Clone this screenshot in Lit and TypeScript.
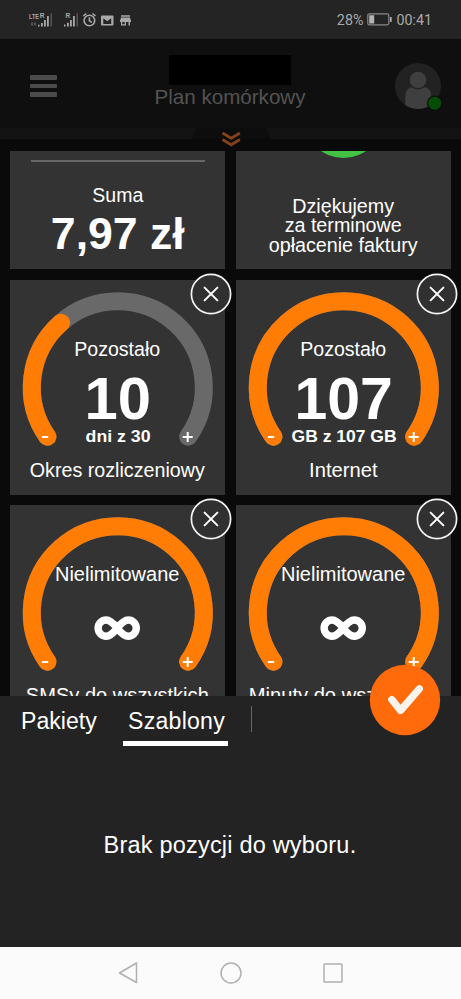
import { LitElement, html, svg, css } from "lit";
import { customElement, property } from "lit/decorators.js";

interface GaugeData {
  caption: string;
  captionWidth: number;
  label: string;
  labelWidth: number;
  value?: string;
  valueWidth?: number;
  detail?: string;
  detailWidth?: number;
  fraction: number;
}

const GAUGES: GaugeData[] = [
  { caption: "Pozostało", captionWidth: 86, value: "10", valueWidth: 66.5, detail: "dni z 30", detailWidth: 65, label: "Okres rozliczeniowy", labelWidth: 175, fraction: 0.335 },
  { caption: "Pozostało", captionWidth: 86, value: "107", valueWidth: 98.5, detail: "GB z 107 GB", detailWidth: 105, label: "Internet", labelWidth: 68.5, fraction: 1 },
  { caption: "Nielimitowane", captionWidth: 124.5, label: "SMSy do wszystkich", labelWidth: 183, fraction: 1 },
  { caption: "Nielimitowane", captionWidth: 124.5, label: "Minuty do wszystkich", labelWidth: 189, fraction: 1 },
];

@customElement("usage-gauge")
export class UsageGauge extends LitElement {
  @property({ attribute: false }) data!: GaugeData;

  static styles = css`
    :host { display: block; position: relative; height: 215px; background: #333; }
    svg { display: block; }
    .dial { width: 215px; height: 215px; }
    .track, .fill { fill: none; stroke-width: 18; stroke-linecap: round; }
    .track { stroke: #696969; }
    .fill { stroke: #ff7d05; }
    text { fill: #fff; text-anchor: middle; font-family: "Liberation Sans", Arial, sans-serif; font-size: 19.3px; }
    .value { font-size: 59px; font-weight: 700; }
    .detail { font-size: 17px; font-weight: 700; }
    .sign { fill: none; stroke: #fff; stroke-width: 2; }
    .infinity { fill: none; stroke: #fff; stroke-width: 7.4; }
    .close { position: absolute; right: -7.2px; top: -6.7px; width: 42px; height: 42px; }
    .ring { fill: #303030; stroke: #f4f4f4; stroke-width: 1.7; }
    .cross { stroke: #fff; stroke-width: 2; stroke-linecap: round; }
  `;

  private arc(fraction: number): string {
    const r = 86, cx = 107.8, cy = 107.3, start = 144.9, sweep = 250.2 * fraction;
    const at = (deg: number) => {
      const a = (deg * Math.PI) / 180;
      return `${(cx + r * Math.cos(a)).toFixed(2)} ${(cy + r * Math.sin(a)).toFixed(2)}`;
    };
    return `M${at(start)}A${r} ${r} 0 ${sweep > 180 ? 1 : 0} 1 ${at(start + sweep)}`;
  }

  render() {
    const d = this.data;
    return html`
      <svg class="dial" viewBox="0 0 215 215">
        <path class="track" d=${this.arc(1)}></path>
        <path class="fill" d=${this.arc(d.fraction)}></path>
        <path class="sign" d="M31.9 157h6.3M172.7 157h10M177.7 152v10"></path>
        <text x="107.2" y="75.8" textLength=${d.captionWidth} lengthAdjust="spacingAndGlyphs">${d.caption}</text>
        ${d.value
          ? svg`<text class="value" x="107.7" y="139.2" textLength=${d.valueWidth} lengthAdjust="spacingAndGlyphs">${d.value}</text>
              <text class="detail" x="108.1" y="161.8" textLength=${d.detailWidth} lengthAdjust="spacingAndGlyphs">${d.detail}</text>`
          : svg`<path class="infinity" d="M107.2 123.1C103 117.800 100 115 96.200 115a8.100 8.100 0 0 0 0 16.200C100 131.200 103 128.400 107.200 123.100S114.400 115 118.200 115a8.100 8.100 0 0 1 0 16.200C114.400 131.200 111.400 128.400 107.200 123.100Z"></path>`}
        <text x="107.3" y="196.6" textLength=${d.labelWidth} lengthAdjust="spacingAndGlyphs">${d.label}</text>
      </svg>
      <svg class="close" viewBox="0 0 42 42">
        <circle class="ring" cx="21" cy="21" r="19.6"></circle>
        <path class="cross" d="M14.6 14.6l12.8 12.8M27.4 14.6L14.6 27.4"></path>
      </svg>
    `;
  }
}

@customElement("status-bar")
export class StatusBar extends LitElement {
  static styles = css`
    :host { display: flex; box-sizing: border-box; height: 39px; padding: 0 29px 0 28px; justify-content: space-between; align-items: center; background: #242424; color: #a9a9a9; font: 14.3px Roboto, sans-serif; }
    svg { display: block; }
    .group { display: flex; align-items: center; gap: 4px; }
    .tiny { font: 700 8px "Liberation Sans", sans-serif; }
    .small { font: 700 6.5px "Liberation Sans", sans-serif; }
  `;
  render() {
    return html`
      <svg width="106" height="20" viewBox="28 9.5 106 20" fill="#a9a9a9">
        <text class="tiny" x="29" y="18.800" textLength="10" lengthAdjust="spacingAndGlyphs">LTE</text>
        <text class="small" x="39.700" y="17.300">R</text>
        <text class="small" x="65.500" y="17.300">R</text>
        <path fill="#555" d="M31 22h2v3h-2zM34 22h2v3h-2zM50.5 13h1.5v13h-1.5zM76.5 13h1.5v13h-1.5z"></path>
        <path d="M38 24.3h1.5v1.7H38zM41 22.5h1.8V26H41zM44 19.5h1.8V26H44zM47 15.5h1.8V26H47zM64 24h1.5v2H64zM67 22.3h1.8V26H67zM70 19.5h1.8V26H70zM73 15.5h1.8V26H73z"></path>
        <g fill="none" stroke="#a9a9a9" stroke-width="1.6">
          <circle cx="89.4" cy="20" r="5.300"></circle>
          <path d="M89.4 16.8v3.4l2.4 1.6M83.3 15.5l3-2.5M95.5 15.500l-3-2.500"></path>
        </g>
        <path fill-rule="evenodd" d="M102 15h10.5q1 0 1 1v8q0 1-1 1H102q-1 0-1-1v-8q0-1 1-1zM103.300 17.800v5.700h7.900v-5.700l-3.950 3z"></path>
        <path fill-rule="evenodd" d="M121 14.7h9v1.5h-9zM121 17h9l1 3.2v1.3h-1V25h-1.5v-3.5H126V25h-5v-3.5h-1v-1.3zM122.3 21.5v2.2h2.4v-2.2z"></path>
      </svg>
      <div class="group">
        <span>28%</span>
        <svg width="25" height="13" viewBox="0 0 25 13">
          <rect x=".8" y=".8" width="21" height="11" rx="1.5" fill="none" stroke="#888" stroke-width="1.2"></rect>
          <path fill="#b4b4b4" d="M2.2 2.2h5v8.2h-5zM23 4h1.6v5H23z"></path>
        </svg>
        <span>00:41</span>
      </div>
    `;
  }
}

@customElement("app-root")
export class AppRoot extends LitElement {
  static styles = css`
    :host { display: flex; flex-direction: column; width: 461px; height: 999px; overflow: hidden; background: #0a0a0a; color: #fff; font-family: "Liberation Sans", Arial, sans-serif; white-space: nowrap; }
    svg { display: block; }
    .header { display: grid; grid-template-columns: 84px 1fr 85px; height: 89px; background: #0f0f0f; }
    .menu { display: flex; flex-direction: column; gap: 4.2px; padding: 36px 0 0 30px; }
    .bar { width: 26.5px; height: 4.5px; border-radius: 1px; background: #4b4b4b; }
    .title { display: flex; flex-direction: column; align-items: center; }
    .redacted { width: 122px; height: 30px; margin-top: 16px; background: #000; }
    .plan { color: #535353; font-size: 20.6px; line-height: 23px; }
    .avatar { padding: 22px 0 0 17px; }
    .pull { height: 23px; }
    .viewport { flex: none; height: 544.5px; overflow: hidden; }
    .cards { display: grid; grid-template-columns: 215px 215px; gap: 10.4px; padding-left: 10.3px; }
    .card { height: 118.3px; overflow: hidden; background: #333; text-align: center; }
    .rule { height: 2px; margin: 9px 20.5px 0; background: #666; }
    .suma { margin-top: 20.5px; font-size: 19.5px; line-height: 24px; }
    .amount { font-size: 44.6px; font-weight: 700; line-height: 50px; margin-top: 2.5px; }
    .thanks { margin-top: 37.5px; font-size: 19.7px; line-height: 19.7px; }
    .panel { display: flex; flex-direction: column; flex: none; position: relative; height: 251.5px; background: #232323; }
    .tabs { display: flex; height: 50px; padding-left: 21px; box-sizing: border-box; font-size: 23.1px; line-height: 50px; }
    .tab { width: 102px; }
    .selected { box-sizing: border-box; width: 105px; padding-left: 5px; border-bottom: 5px solid #fff; letter-spacing: .25px; }
    .divider { width: 1.4px; height: 26px; margin: 10px 0 0 22.8px; background: #666; }
    .empty { padding-top: 85px; text-align: center; font-size: 23.5px; line-height: 28px; letter-spacing: .2px; text-indent: -1px; }
    .fab { position: absolute; left: 369.3px; top: -31.8px; }
    .nav { display: flex; justify-content: space-between; align-items: center; flex: 1; padding: 0 116px; background: #fbfbfb; }
  `;

  render() {
    return html`
      <status-bar></status-bar>
      <header class="header">
        <div class="menu"><div class="bar"></div><div class="bar"></div><div class="bar"></div></div>
        <div class="title"><div class="redacted"></div><div class="plan">Plan komórkowy</div></div>
        <div class="avatar">
          <svg width="50" height="52" viewBox="0 0 50 52">
            <clipPath id="disc"><circle cx="25" cy="25" r="23"></circle></clipPath>
            <circle cx="25" cy="25" r="23" fill="#222"></circle>
            <g clip-path="url(#disc)" fill="#3f3f3f">
              <path d="M12.300 50V37q0-11 8-11h10q8 0 8 11v13z"></path>
              <circle cx="25" cy="19" r="9.500" fill="#222"></circle>
              <circle cx="25" cy="19" r="8.300"></circle>
            </g>
            <circle cx="41.700" cy="42.200" r="7.800" fill="#0f0f0f"></circle>
            <circle cx="41.700" cy="42.200" r="6.500" fill="#064b06"></circle>
          </svg>
        </div>
      </header>
      <svg class="pull" width="461" height="23" viewBox="0 128 461 23">
        <path fill="#131313" d="M0 128h197l-5 11H0zM265 128h196v11H271z"></path>
        <path fill="#0d0d0d" d="M197 128h68l6 11h-79z"></path>
        <path fill="none" stroke="#84421c" stroke-width="2.800" d="M222.500 133l8.700 5.300 8.700-5.300M222.500 139.500l8.700 5.300 8.700-5.300"></path>
      </svg>
      <main class="viewport">
        <div class="cards">
          <section class="card">
            <div class="rule"></div>
            <div class="suma">Suma</div>
            <div class="amount">7,97 zł</div>
          </section>
          <section class="card">
            <svg width="215" height="8"><circle cx="107.500" cy="-32.500" r="39.500" fill="#43c244"></circle></svg>
            <div class="thanks">Dziękujemy<br />za terminowe<br />opłacenie faktury</div>
          </section>
          ${GAUGES.map((g) => html`<usage-gauge .data=${g}></usage-gauge>`)}
        </div>
      </main>
      <section class="panel">
        <div class="tabs">
          <div class="tab">Pakiety</div>
          <div class="tab selected">Szablony</div>
          <div class="divider"></div>
        </div>
        <div class="empty">Brak pozycji do wyboru.</div>
        <svg class="fab" width="72" height="72" viewBox="0 0 72 72">
          <circle cx="36" cy="36" r="35.200" fill="#ff6a0a"></circle>
          <path d="M22.800 35.500L31.500 46.500 50.300 24.800" fill="none" stroke="#f7f4ee" stroke-width="7.300" stroke-linecap="round" stroke-linejoin="round"></path>
        </svg>
      </section>
      <nav class="nav">
        <svg width="24" height="24" viewBox="0 0 24 24" fill="none" stroke="#b0b0b0" stroke-width="1.500" stroke-linejoin="round"><path d="M20.500 2v19.500L3.500 12z"></path></svg>
        <svg width="24" height="24" viewBox="0 0 24 24" fill="none" stroke="#b0b0b0" stroke-width="1.500"><circle cx="12" cy="12" r="10"></circle></svg>
        <svg width="24" height="24" viewBox="0 0 24 24" fill="none" stroke="#b0b0b0" stroke-width="1.500"><rect x="3" y="3" width="18" height="18" rx=".8"></rect></svg>
      </nav>
    `;
  }
}
